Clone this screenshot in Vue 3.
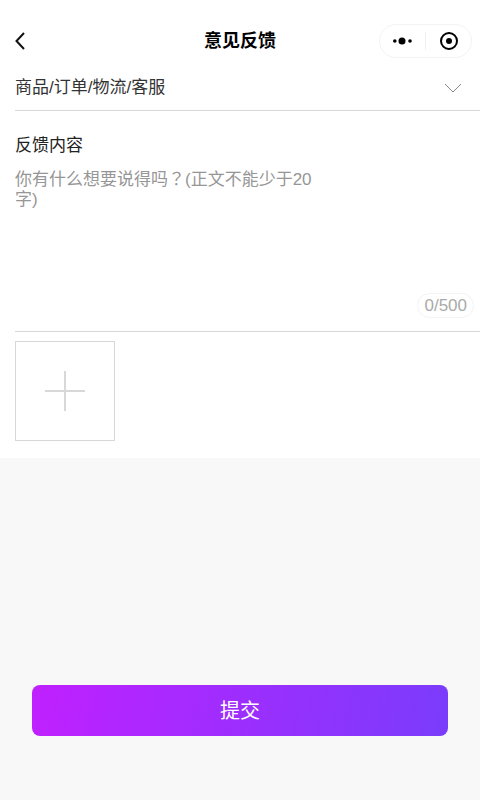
<script setup>
const title = '意见反馈'
</script>

<template>
  <div class="page">
    <div class="panel">
      <header class="nav">
        <svg class="back" width="12" height="20" viewBox="0 0 12 20"><path d="M9 2 L1.5 10 L9 18" fill="none" stroke="#111" stroke-width="2"/></svg>
        <h1 class="title">{{ title }}</h1>
        <div class="capsule">
          <svg width="20" height="8" viewBox="0 0 20 8"><circle cx="1.8" cy="4" r="1.8" fill="#000"/><circle cx="9" cy="4" r="3.5" fill="#000"/><circle cx="17" cy="4" r="1.8" fill="#000"/></svg>
          <span class="sep"></span>
          <svg width="20" height="20" viewBox="0 0 20 20"><circle cx="10" cy="10" r="8" fill="none" stroke="#000" stroke-width="2"/><circle cx="10" cy="10" r="3" fill="#000"/></svg>
        </div>
      </header>
      <div class="select">
        <span>商品/订单/物流/客服</span>
        <svg class="chevron" width="18" height="10" viewBox="0 0 18 10"><path d="M1 1 L9 9 L17 1" fill="none" stroke="#888" stroke-width="1"/></svg>
      </div>
      <div class="content">
        <div class="label">反馈内容</div>
        <div class="placeholder">你有什么想要说得吗？(正文不能少于20字)</div>
        <div class="count-row"><span class="count">0/500</span></div>
      </div>
      <div class="upload">
        <div class="add">
          <svg width="40" height="40" viewBox="0 0 40 40"><path d="M0 20 H40 M20 0 V40" stroke="#d8d8d8" stroke-width="2"/></svg>
        </div>
      </div>
    </div>
    <div class="foot">
      <button class="submit" type="button">提交</button>
    </div>
  </div>
</template>

<style>
html, body { margin: 0; background: #f8f8f8; }
</style>

<style scoped>
.page {
  height: 800px;
  display: flex;
  flex-direction: column;
  background: #f8f8f8;
  font-family: "Liberation Sans", "Noto Sans CJK SC", sans-serif;
  overflow: hidden;
}
.panel { background: #fff; height: 458px; }
.nav {
  padding: 16px 8px 0 15px;
  box-sizing: border-box;
  display: flex;
  align-items: center;
  height: 66px;
  position: relative;
}
.back { flex: none; }
.title {
  position: absolute;
  left: 0;
  right: 0;
  top: 29px;
  margin: 0;
  text-align: center;
  font-size: 18px;
  line-height: 24px;
  font-weight: 700;
  color: #000;
}
.capsule {
  margin-left: auto;
  width: 93px;
  height: 34px;
  box-sizing: border-box;
  border: 1px solid #f3f3f3;
  border-radius: 17px;
  display: flex;
  align-items: center;
  padding-left: 13px;
  background: #fff;
}
.sep { width: 1px; height: 18px; background: #f0f0f0; margin: 0 13px 0 12px; }
.select {
  margin-left: 15px;
  height: 45px;
  box-sizing: border-box;
  border-bottom: 1px solid #d8d8d8;
  padding: 0 18px 5px 0;
  display: flex;
  align-items: center;
  justify-content: space-between;
  font-size: 17px;
  color: #333;
}
.chevron { margin-top: 5px; }
.content {
  margin-left: 15px;
  height: 221px;
  box-sizing: border-box;
  border-bottom: 1px solid #d8d8d8;
  padding-top: 23px;
  display: flex;
  flex-direction: column;
}
.label { font-size: 17px; line-height: 24px; color: #222; }
.placeholder {
  margin-top: 12px;
  width: 300px;
  font-family: "Liberation Sans", "Noto Sans CJK TC", sans-serif;
  font-size: 17px;
  line-height: 20px;
  color: #969696;
}
.count-row { margin-top: auto; display: flex; justify-content: flex-end; padding: 0 6px 13px 0; }
.count {
  font-size: 17px;
  line-height: 23px;
  padding: 0 6px;
  color: #aaa;
  border: 1px solid #f3f3f3;
  border-radius: 13px;
}
.upload { padding: 9px 0 0 15px; }
.add {
  width: 100px;
  height: 100px;
  box-sizing: border-box;
  border: 1px solid #d8d8d8;
  display: flex;
  align-items: center;
  justify-content: center;
}
.foot { padding: 227px 32px 0; }
.submit {
  display: block;
  width: 100%;
  height: 51px;
  border: 0;
  border-radius: 8px;
  padding: 0 0 2px;
  background: linear-gradient(100deg, #c020ff, #7a3cfb);
  color: #fff;
  font-family: inherit;
  font-size: 20px;
}
</style>
